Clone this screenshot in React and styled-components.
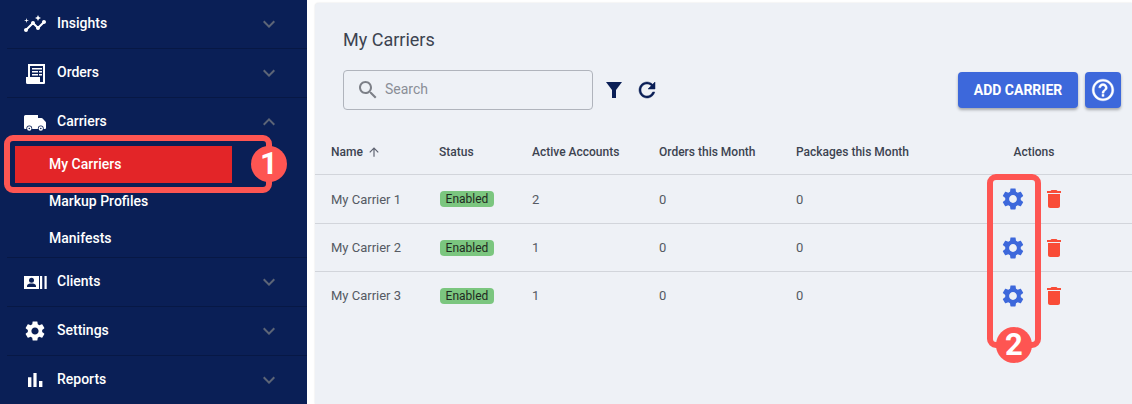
import React from 'react';
import styled, { createGlobalStyle } from 'styled-components';

const Global = createGlobalStyle`
  html, body { margin: 0; padding: 0; background: #fff; }
  body { font-family: Roboto, "Liberation Sans", sans-serif; width: 1132px; height: 404px; overflow: hidden; }
`;

const Page = styled.div`
  position: relative;
  display: flex;
  width: 1132px;
  height: 404px;
  overflow: hidden;
  background: #fff;
`;

const Sidebar = styled.nav`
  flex: 0 0 307px;
  height: 404px;
  background: #0a1f56;
  overflow: hidden;
`;

const NavList = styled.div`
  padding-left: 7px;
`;

const NavRow = styled.div`
  box-sizing: border-box;
  height: 49px;
  display: flex;
  align-items: center;
  padding-left: 16px;
  padding-right: 26px;
  border-bottom: 1px solid ${p => (p.$flat ? 'transparent' : '#071845')};
  color: #fff;
  font-size: 14px;
  font-weight: 500;
`;

const NavIcon = styled.span`
  flex: 0 0 34px;
  display: flex;
  align-items: center;
  height: 24px;
  color: #fff;
`;

const NavLabel = styled.span`
  flex: 1;
  position: relative;
  top: -1px;
`;

const SubList = styled.div`
  margin-top: -1px;
  border-bottom: 1px solid #071845;
`;

const SubRow = styled.div`
  box-sizing: border-box;
  height: 37px;
  width: 217px;
  margin-left: 8px;
  padding-left: 34px;
  padding-bottom: 2px;
  display: flex;
  align-items: center;
  color: #fff;
  font-size: 14px;
  font-weight: 500;
  background: ${p => (p.$active ? '#e32528' : 'transparent')};
`;

const Main = styled.main`
  flex: 1;
  margin: 3px 0 0 8px;
  background: #eef1f6;
  border-radius: 4px 0 0 0;
  box-shadow: 0 0 2px rgba(0, 0, 0, 0.14);
`;

const Title = styled.h1`
  margin: 0;
  padding: 26px 0 0 28px;
  font-size: 18px;
  line-height: 21px;
  font-weight: 400;
  color: #3c4350;
`;

const Toolbar = styled.div`
  display: flex;
  align-items: center;
  margin-top: 20px;
  padding: 0 11px 0 28px;
  height: 40px;
`;

const SearchBox = styled.div`
  box-sizing: border-box;
  width: 250px;
  height: 40px;
  border: 1px solid #b0b4bc;
  border-radius: 4px;
  display: flex;
  align-items: center;
  padding-left: 12px;
  gap: 5px;
  color: #8a8e96;
  font-size: 14px;
`;

const SearchText = styled.span`
  position: relative;
  top: -1px;
`;

const ToolIcon = styled.span`
  display: flex;
  margin-left: ${p => p.$gap}px;
  color: #0a1f56;
`;

const Spacer = styled.div`
  flex: 1;
`;

const Button = styled.button`
  box-sizing: border-box;
  height: 36px;
  width: ${p => p.$w}px;
  margin-left: ${p => p.$gap || 0}px;
  border: 0;
  padding: 0;
  border-radius: 4px;
  background: #3d68db;
  color: #fff;
  font-family: inherit;
  font-size: 14px;
  font-weight: 700;
  display: flex;
  align-items: center;
  justify-content: center;
  box-shadow: 0 2px 3px rgba(0, 0, 0, 0.3);
`;

const Grid = styled.div`
  display: grid;
  grid-template-columns: 108px 93px 127px 137px 188px 100px;
  align-items: center;
  box-sizing: border-box;
  height: ${p => p.$h}px;
  padding-left: 16px;
  border-bottom: 1px solid ${p => (p.$last ? 'transparent' : '#d2d5db')};
  font-size: ${p => (p.$head ? 12 : 13)}px;
  color: ${p => (p.$head ? '#3c4350' : '#555a63')};
  font-weight: ${p => (p.$head ? 500 : 400)};
`;

const HeadRow = styled(Grid)`
  margin-top: 16px;
  padding-top: 3px;
`;

const NameHead = styled.span`
  display: flex;
  align-items: center;
  gap: 4px;
`;

const Centered = styled.div`
  text-align: center;
`;

const Badge = styled.span`
  display: block;
  box-sizing: border-box;
  width: 54px;
  height: 16px;
  line-height: 16px;
  margin-left: 1px;
  border-radius: 4px;
  background: #7bc67f;
  color: #1f2a22;
  font-size: 12px;
  text-align: center;
`;

const Actions = styled.div`
  display: flex;
  align-items: center;
  justify-content: center;
  gap: 16px;
  padding-right: 2px;
`;

const Ring = styled.div`
  position: absolute;
  box-sizing: border-box;
  left: ${p => p.$x}px;
  top: ${p => p.$y}px;
  width: ${p => p.$w}px;
  height: ${p => p.$h}px;
  border: 6px solid #fe5552;
  border-radius: 9px;
  pointer-events: none;
`;

const Marker = styled.div`
  position: absolute;
  left: ${p => p.$x - 18}px;
  top: ${p => p.$y - 18}px;
  width: 36px;
  height: 36px;
  border-radius: 50%;
  background: #fe5552;
  color: #fff;
  font-size: 31px;
  font-weight: 700;
  line-height: 36px;
  text-align: center;
`;

const I = ({ d, size = 24, color = 'currentColor', bold }) => (
  <svg
    width={size}
    height={size}
    viewBox="0 0 24 24"
    fill={color}
    stroke={bold ? color : 'none'}
    strokeWidth={bold || 0}
    style={{ display: 'block' }}
  >
    <path d={d} />
  </svg>
);

const P = {
  more: 'M16.59 8.59L12 13.17 7.41 8.59 6 10l6 6 6-6z',
  less: 'M12 8l-6 6 1.41 1.41L12 10.83l4.59 4.58L18 14z',
  insights: 'M21 8c-1.45 0-2.26 1.44-1.93 2.51l-3.55 3.56c-.3-.09-.74-.09-1.04 0l-2.55-2.55C12.27 10.45 11.46 9 10 9c-1.45 0-2.27 1.44-1.93 2.52l-4.56 4.55C2.44 15.74 1 16.55 1 18c0 1.1.9 2 2 2 1.45 0 2.26-1.44 1.93-2.51l4.55-4.56c.3.09.74.09 1.04 0l2.55 2.55C12.73 16.55 13.54 18 15 18c1.45 0 2.27-1.44 1.93-2.52l3.56-3.55c1.07.33 2.51-.48 2.51-1.93 0-1.1-.9-2-2-2zM15 9l.94-2.07L18 6l-2.06-.93L15 3l-.92 2.07L12 6l2.08.93zM3.5 11L4 9l2-.5L4 8l-.5-2L3 8l-2 .5L3 9z',
  gear: 'M19.14 12.94c.04-.3.06-.61.06-.94 0-.32-.02-.64-.07-.94l2.03-1.58c.18-.14.23-.41.12-.61l-1.92-3.32c-.12-.22-.37-.29-.59-.22l-2.39.96c-.5-.38-1.03-.7-1.62-.94l-.36-2.54c-.04-.24-.24-.41-.48-.41h-3.84c-.24 0-.43.17-.47.41l-.36 2.54c-.59.24-1.13.57-1.62.94l-2.39-.96c-.22-.08-.47 0-.59.22L2.74 8.87c-.12.21-.08.47.12.61l2.03 1.58c-.05.3-.09.63-.09.94s.02.64.07.94l-2.03 1.58c-.18.14-.23.41-.12.61l1.92 3.32c.12.22.37.29.59.22l2.39-.96c.5.38 1.03.7 1.62.94l.36 2.54c.05.24.24.41.48.41h3.84c.24 0 .44-.17.47-.41l.36-2.54c.59-.24 1.13-.56 1.62-.94l2.39.96c.22.08.47 0 .59-.22l1.92-3.32c.12-.22.07-.47-.12-.61l-2.01-1.58zM12 15.6c-1.98 0-3.6-1.62-3.6-3.6s1.62-3.6 3.6-3.6 3.6 1.62 3.6 3.6-1.62 3.6-3.6 3.6z',
  trash: 'M6 19c0 1.1.9 2 2 2h8c1.1 0 2-.9 2-2V7H6v12zM19 4h-3.5l-1-1h-5l-1 1H5v2h14V4z',
  filter: 'M4 4h16l-6 8v8h-4v-8z',
  refresh: 'M17.65 6.35C16.2 4.9 14.21 4 12 4c-4.42 0-7.99 3.58-7.99 8s3.57 8 7.99 8c3.73 0 6.84-2.55 7.73-6h-2.08c-.82 2.33-3.04 4-5.65 4-3.31 0-6-2.69-6-6s2.69-6 6-6c1.66 0 3.14.69 4.22 1.78L13 11h7V4l-2.35 2.35z',
  help: 'M11 18h2v-2h-2v2zm1-16C6.48 2 2 6.48 2 12s4.48 10 10 10 10-4.48 10-10S17.52 2 12 2zm0 18c-4.41 0-8-3.59-8-8s3.59-8 8-8 8 3.59 8 8-3.59 8-8 8zm0-14c-2.21 0-4 1.79-4 4h2c0-1.1.9-2 2-2s2 .9 2 2c0 2-3 1.75-3 5h2c0-2.25 3-2.5 3-5 0-2.21-1.79-4-4-4z',
  search: 'M15.5 14h-.79l-.28-.27C15.41 12.59 16 11.11 16 9.5 16 5.91 13.09 3 9.5 3S3 5.91 3 9.5 5.91 16 9.5 16c1.61 0 3.09-.59 4.23-1.57l.27.28v.79l5 4.99L20.49 19l-4.99-5zm-6 0C7.01 14 5 11.99 5 9.5S7.01 5 9.5 5 14 7.01 14 9.5 11.99 14 9.5 14z',
  up: 'M4 12l1.41 1.41L11 7.83V20h2V7.83l5.58 5.59L20 12l-8-8-8 8z',
  bars: 'M5 9.2h3.400V19H5zM10.400 5h3.200v14h-3.200zm5.600 8H19.400v6H16z',
};

const OrdersIcon = () => (
  <svg width="24" height="24" viewBox="0 0 24 24">
    <path fill="#fff" d="M5 3h17v19a1 1 0 0 1-1 1H4.500A1.500 1.500 0 0 1 3 21.500V16h2z" />
    <path fill="#0a1f56" d="M7 5h13v16h-3v-5H7z" />
    <path fill="#fff" d="M9 7h10v1.500H9zM9 10h6v1.500H9zM16 10h3v1.500h-3zM9 13h6v1.500H9zM16 13h3v1.500h-3z" />
  </svg>
);

const TruckIcon = () => (
  <svg width="24" height="24" viewBox="0 0 24 24">
    <path fill="#fff" d="M1 6.500A1.500 1.500 0 0 1 2.500 5H15v3h3.500a1.500 1.500 0 0 1 1.100.500l3 3.200a1.500 1.500 0 0 1 .400 1V18a1 1 0 0 1-1 1H2a1 1 0 0 1-1-1z" />
    <circle cx="6.300" cy="18.500" r="2.900" fill="#0a1f56" />
    <circle cx="17.800" cy="18.500" r="2.900" fill="#0a1f56" />
    <circle cx="6.300" cy="18.500" r="2.200" fill="#fff" />
    <circle cx="17.800" cy="18.500" r="2.200" fill="#fff" />
    <circle cx="6.300" cy="18.500" r="0.800" fill="#0a1f56" />
    <circle cx="17.800" cy="18.500" r="0.800" fill="#0a1f56" />
  </svg>
);

const ClientsIcon = () => (
  <svg width="24" height="24" viewBox="0 0 24 24">
    <path fill="#fff" d="M1 6h15v13H1z" />
    <circle cx="8.500" cy="10.300" r="2.500" fill="#0a1f56" />
    <path fill="#0a1f56" d="M4 17v-1.300C4 14 6.500 13.500 8.500 13.500s4.500.5 4.500 2.200V17z" />
    <path fill="#fff" d="M17 6h2.200v13H17zM21.500 6h2.200v13h-2.200z" />
  </svg>
);

const nav = (label, icon, open) => (
  <NavRow $flat={open}>
    <NavIcon>{icon}</NavIcon>
    <NavLabel>{label}</NavLabel>
    <I d={open ? P.less : P.more} color="#5d6577" />
  </NavRow>
);

const rows = [['My Carrier 1', 2, 49], ['My Carrier 2', 1, 48], ['My Carrier 3', 1, 48]];

export default function App() {
  return (
    <Page>
      <Global />
      <Sidebar>
        <NavList>
          {nav('Insights', <I d={P.insights} />)}
          {nav('Orders', <OrdersIcon />)}
          {nav('Carriers', <TruckIcon />, true)}
          <SubList>
            <SubRow $active>My Carriers</SubRow>
            <SubRow>Markup Profiles</SubRow>
            <SubRow>Manifests</SubRow>
          </SubList>
          {nav('Clients', <ClientsIcon />)}
          {nav('Settings', <I d={P.gear} />)}
          {nav('Reports', <I d={P.bars} />)}
        </NavList>
      </Sidebar>
      <Main>
        <Title>My Carriers</Title>
        <Toolbar>
          <SearchBox>
            <I d={P.search} color="#7d8088" />
            <SearchText>Search</SearchText>
          </SearchBox>
          <ToolIcon $gap={9}><I d={P.filter} /></ToolIcon>
          <ToolIcon $gap={9}><I d={P.refresh} bold={0.5} /></ToolIcon>
          <Spacer />
          <Button $w={120}>ADD CARRIER</Button>
          <Button $w={36} $gap={7}><I d={P.help} size={26} bold={0.3} /></Button>
        </Toolbar>
        <HeadRow $h={49} $head>
          <NameHead>Name <I d={P.up} size={14} color="#5d6270" /></NameHead>
          <span>Status</span>
          <span>Active Accounts</span>
          <span>Orders this Month</span>
          <span>Packages this Month</span>
          <Centered>Actions</Centered>
        </HeadRow>
        {rows.map(([name, n, h], i) => (
          <Grid key={name} $h={h} $last={i === 2}>
            <span>{name}</span>
            <span><Badge>Enabled</Badge></span>
            <span>{n}</span>
            <span>0</span>
            <span>0</span>
            <Actions>
              <I d={P.gear} size={26} color="#3d68db" />
              <I d={P.trash} color="#f94c37" />
            </Actions>
          </Grid>
        ))}
      </Main>
      <Ring $x={4} $y={135} $w={268} $h={58} />
      <Marker $x={269} $y={164}>1</Marker>
      <Ring $x={987} $y={174} $w={54} $h={174} />
      <Marker $x={1014} $y={345}>2</Marker>
    </Page>
  );
}
